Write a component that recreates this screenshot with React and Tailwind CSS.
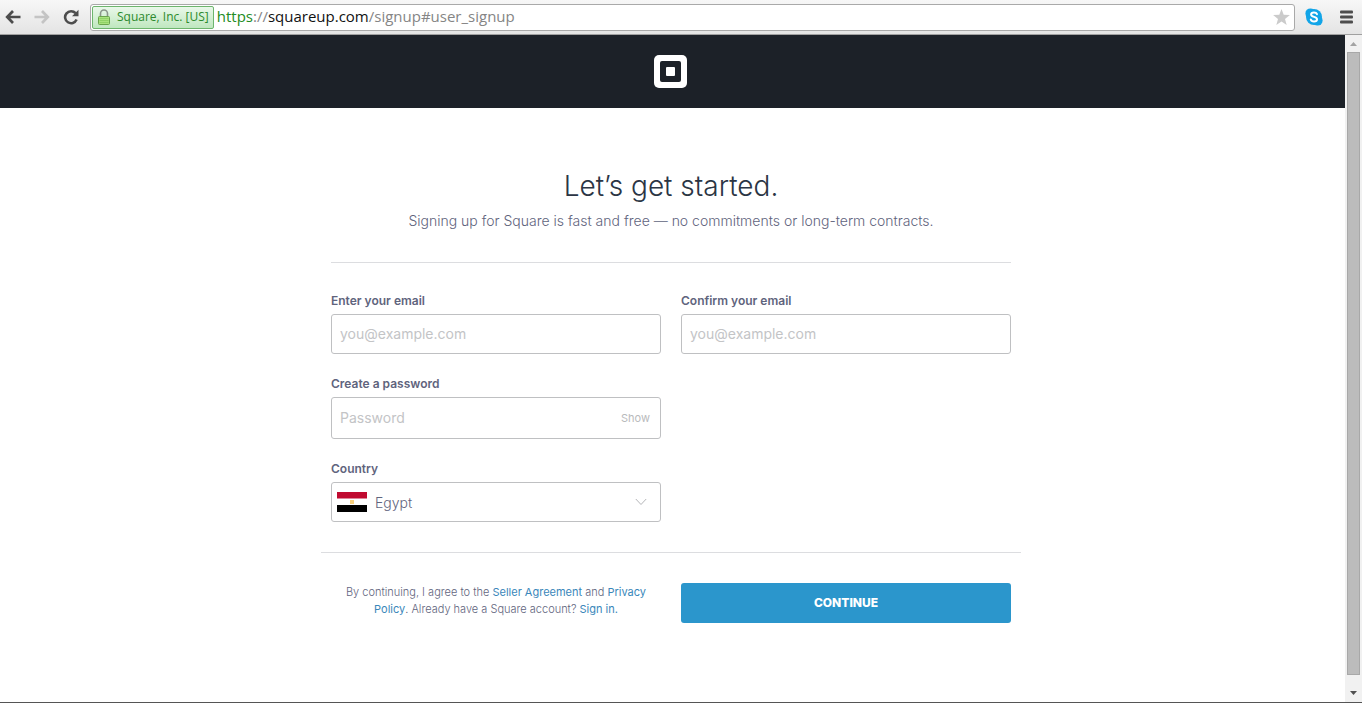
import React, { useState } from "react";

function BackIcon() {
  return (
    <svg width="16" height="14" viewBox="0 0 16 14" fill="none" stroke="currentColor" strokeWidth="2.7">
      <path d="M8 1 2.2 7 8 13M2.5 7H15.5" />
    </svg>
  );
}

function ReloadIcon() {
  return (
    <svg width="16" height="16" viewBox="0 0 16 16" fill="none">
      <path d="M12.6 4.2A6 6 0 1 0 13.6 10.6" stroke="#4d4d4d" strokeWidth="2.6" />
      <path d="M15.5 0.8V7.3H9z" fill="#4d4d4d" />
    </svg>
  );
}

function LockIcon() {
  return (
    <svg width="12" height="16" viewBox="0 0 12 16" fill="none">
      <path d="M2.5 8V4.5a3.500 3.500 0 0 1 7 0V8" stroke="#8b978b" strokeWidth="1.6" />
      <rect x="0.5" y="7.5" width="11" height="8" rx="1" fill="#a9e27e" stroke="#6aa54c" />
      <path d="M1.5 9.5h9M1.5 11.5h9M1.5 13.5h9" stroke="#8fd266" />
    </svg>
  );
}

function SkypeIcon() {
  return (
    <svg width="18" height="18" viewBox="0 0 18 18">
      <circle cx="5.4" cy="5.4" r="5" fill="#12a5e8" />
      <circle cx="12.6" cy="12.6" r="5" fill="#12a5e8" />
      <circle cx="9" cy="9" r="8" fill="#12a5e8" />
      <path
        d="M12 6.2C11.5 4.9 10.3 4.5 9 4.5c-1.6 0-2.9.7-2.9 2.1 0 3 5.9 1.5 5.9 4.6 0 1.500-1.400 2.300-3 2.300s-2.800-.6-3.200-2"
        fill="none"
        stroke="#fff"
        strokeWidth="2"
        strokeLinecap="round"
      />
    </svg>
  );
}

function BrowserBar() {
  return (
    <div className="flex h-[35px] items-center border-b border-[#a0a0a0] bg-linear-to-b from-[#f7f7f7] to-[#e4e4e4] pl-[5px] pr-[9px]">
      <button type="button" aria-label="Back" className="mr-[13px] text-[#4d4d4d]">
        <BackIcon />
      </button>
      <button type="button" aria-label="Forward" className="mr-[13px] rotate-180 text-[#c4c4c4]">
        <BackIcon />
      </button>
      <button type="button" aria-label="Reload" className="mr-[11px]">
        <ReloadIcon />
      </button>
      <div className="flex h-[27px] min-w-0 flex-1 items-center rounded-[3px] border border-[#a9a9a9] bg-white pl-px pr-[4px]">
        <div className="flex h-[23px] shrink-0 items-center gap-[7px] whitespace-nowrap rounded-[2px] border border-[#6db56d] bg-linear-to-b from-[#eaf8ea] to-[#bfe7bf] pl-[5px] pr-[4px] font-['Open_Sans',sans-serif] text-[12px] text-[#2d8a2d]">
          <LockIcon />
          Square, Inc. [US]
        </div>
        <div className="ml-[3px] min-w-0 flex-1 whitespace-nowrap pb-[2px] font-['Open_Sans',sans-serif] text-[15px] leading-5 text-[#858585]">
          <span className="text-[#238c23]">https</span>://
          <span className="text-[#111111]">squareup.com</span>/signup#user_signup
        </div>
        <button type="button" aria-label="Bookmark this page">
          <svg width="17" height="17" viewBox="0 0 17 17" fill="#cbcbcb">
            <path d="m8.500 0 2.200 5.800 6.200.3-4.900 3.900 1.700 6.100-5.200-3.500-5.200 3.500L5 10 .1 6.100l6.200-.3z" />
          </svg>
        </button>
      </div>
      <button type="button" aria-label="Skype" className="ml-[10px]">
        <SkypeIcon />
      </button>
      <button type="button" aria-label="Menu" className="ml-[17px]">
        <svg width="13" height="14" viewBox="0 0 13 14" fill="#4d4d4d">
          <rect y="0.500" width="13" height="3" rx="1" />
          <rect y="5.500" width="13" height="3" rx="1" />
          <rect y="10.500" width="13" height="3" rx="1" />
        </svg>
      </button>
    </div>
  );
}

function Scrollbar() {
  return (
    <div className="flex w-[17px] shrink-0 flex-col items-center justify-between bg-[#f1f1f1]" aria-hidden="true">
      <svg width="17" height="17" viewBox="0 0 17 17" fill="#a3a3a3">
        <path d="M5 11h7L8.500 7z" />
      </svg>
      <div className="w-[13px] flex-1 border border-[#a8a8a8] bg-[#bcbcbc]" />
      <svg width="17" height="27" viewBox="0 0 17 27" fill="#505050">
        <path d="M5 16h7l-3.500 4z" />
      </svg>
    </div>
  );
}

const labelClass = "mb-[5px] block text-[12px] font-semibold leading-4 text-[#5f647d]";
const boxClass = "flex w-full items-center rounded-[3px] border border-[#bfc0c2] bg-white";
const inputClass = "min-w-0 flex-1 bg-transparent px-2 pb-[2px] text-[14px] text-[#5f647d] outline-none placeholder:text-[#c3c4c6]";
const linkClass = "font-normal text-[#3a87ba]";

function EmailField({ id, label }) {
  return (
    <div>
      <label htmlFor={id} className={labelClass}>{label}</label>
      <div className={`${boxClass} h-10`}>
        <input id={id} type="email" placeholder="you@example.com" className={inputClass} />
      </div>
    </div>
  );
}

function EgyptFlag() {
  return (
    <svg width="30" height="20" viewBox="0 0 30 20" className="shrink-0">
      <rect width="30" height="20" fill="#fff" />
      <rect width="30" height="6.500" fill="#c00a30" />
      <rect y="13" width="30" height="7" fill="#000" />
      <path d="M13 8h4v4h-4z" fill="#f8d07e" />
    </svg>
  );
}

function SignupForm() {
  const [shown, setShown] = useState(false);
  return (
    <form className="mt-[30px]" onSubmit={(event) => event.preventDefault()}>
      <div className="grid grid-cols-2 gap-x-5 gap-y-[22px]">
        <EmailField id="email" label="Enter your email" />
        <EmailField id="confirm" label="Confirm your email" />
        <div className="col-start-1">
          <label htmlFor="password" className={labelClass}>Create a password</label>
          <div className={`${boxClass} h-[42px]`}>
            <input id="password" type={shown ? "text" : "password"} placeholder="Password" className={inputClass} />
            <button type="button" onClick={() => setShown(!shown)} className="mr-[10px] text-[11px] text-[#b9babc]">
              {shown ? "Hide" : "Show"}
            </button>
          </div>
        </div>
        <div className="col-start-1">
          <label htmlFor="country" className={labelClass}>Country</label>
          <div className={`${boxClass} h-10 pl-[5px] pr-[13px]`}>
            <EgyptFlag />
            <select id="country" className="ml-2 flex-1 appearance-none bg-transparent text-[14px] font-light text-[#5f647d] outline-none">
              <option>Egypt</option>
            </select>
            <svg width="12" height="8" viewBox="0 0 12 8" fill="none" stroke="#b4b5b8">
              <path d="m.8 1 5.200 5.500L11.200 1" />
            </svg>
          </div>
        </div>
      </div>
      <hr className="-mx-[10px] mt-[30px] border-[#dcdde0]" />
      <div className="mt-[30px] grid grid-cols-2 gap-x-5">
        <p className="px-3 pt-px text-center text-[11px] font-light leading-[17px] text-[#5f647d]">
          By continuing, I agree to the{" "}
          <a href="#seller" className={linkClass}>Seller Agreement</a> and{" "}
          <a href="#privacy" className={linkClass}>Privacy Policy</a>. Already have a Square account?{" "}
          <a href="#signin" className={linkClass}>Sign in.</a>
        </p>
        <button type="submit" className="h-10 rounded-[3px] bg-[#2b96cc] text-[12px] font-extrabold text-white">
          CONTINUE
        </button>
      </div>
    </form>
  );
}

export default function App() {
  return (
    <div className="min-h-screen bg-white pr-1 font-['Inter',sans-serif]">
      <div className="flex min-h-screen flex-col">
        <BrowserBar />
        <div className="flex flex-1 border-b border-[#555555]">
          <div className="min-w-0 flex-1">
            <header className="flex h-[73px] items-center justify-center bg-[#1c2128] pr-[3px]">
              <svg width="34" height="34" viewBox="0 0 34 34" role="img" aria-label="Square">
                <rect width="33" height="33" rx="5" fill="#fff" />
                <rect x="6" y="6" width="21" height="21" rx="2" fill="#1c2128" />
                <rect x="12" y="12" width="9" height="9" rx="1" fill="#fff" />
              </svg>
            </header>
            <main className="pr-[3px] pt-[58px]">
              <div className="mx-auto max-w-[680px]">
                <h1 className="text-center text-[28px] font-light leading-10 text-[#2b3544]">Let’s get started.</h1>
                <p className="mt-[5px] text-center text-[14px] font-light leading-5 text-[#5f647d]">
                  Signing up for Square is fast and free — no commitments or long-term contracts.
                </p>
                <hr className="mt-[31px] border-[#dcdde0]" />
                <SignupForm />
              </div>
            </main>
          </div>
          <Scrollbar />
        </div>
      </div>
    </div>
  );
}
